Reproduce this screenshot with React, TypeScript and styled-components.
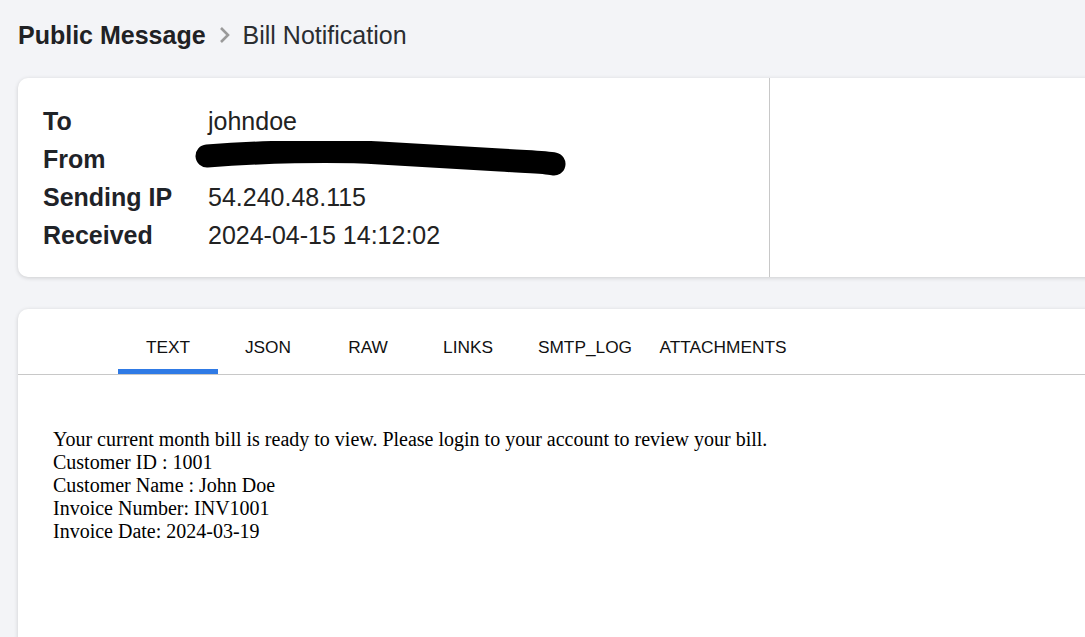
import React from "react";
import styled, { createGlobalStyle } from "styled-components";

const Global = createGlobalStyle`
  html, body { margin: 0; padding: 0; }
  body {
    background: #f3f4f7;
    font-family: "Liberation Sans", Arial, sans-serif;
    overflow: hidden;
    width: 1085px;
    height: 637px;
  }
`;

const Page = styled.div`
  padding: 21px 0 0 18px;
  display: flex;
  flex-direction: column;
`;

const Breadcrumb = styled.div`
  display: flex;
  align-items: center;
  font-size: 25px;
  line-height: 28px;
  color: #1f2328;
  height: 28px;
`;

const Crumb = styled.span<{ $bold?: boolean }>`
  font-weight: ${(p) => (p.$bold ? 700 : 400)};
  color: ${(p) => (p.$bold ? "#202124" : "#2a2d31")};
`;

const Sep = styled.span`
  display: inline-flex;
  align-items: center;
  margin: 0 12px 0 12px;
  color: #9a9a9a;
`;

const Card = styled.div`
  background: #fff;
  border-radius: 10px;
  box-shadow: 0 1px 4px rgba(0, 0, 0, 0.16);
  margin-right: -40px;
`;

const HeaderCard = styled(Card)`
  margin-top: 29px;
  height: 199px;
  display: flex;
`;

const MetaSection = styled.div`
  width: 752px;
  box-sizing: border-box;
  border-right: 1px solid #c8c8c8;
  padding: 25px 0 0 25px;
`;

const MetaGrid = styled.div`
  display: grid;
  grid-template-columns: 165px auto;
  grid-auto-rows: 37.75px;
  align-items: center;
  font-size: 25px;
`;

const Label = styled.div`
  font-weight: 700;
  color: #1f2328;
`;

const Value = styled.div`
  color: #222;
  display: flex;
  align-items: center;
`;

const Redaction = styled.svg`
  margin-left: -13px;
  margin-top: 3px;
  display: block;
`;

const SideSection = styled.div`
  flex: 1;
`;

const BodyCard = styled(Card)`
  margin-top: 32px;
  height: 400px;
  border-bottom-left-radius: 0;
  border-bottom-right-radius: 0;
`;

const TabBar = styled.div`
  display: flex;
  height: 66px;
  box-sizing: border-box;
  padding-left: 100px;
  border-bottom: 1px solid #c8c8c8;
`;

const Tab = styled.div<{ $active?: boolean; $w: number }>`
  width: ${(p) => p.$w}px;
  box-sizing: border-box;
  display: flex;
  align-items: center;
  justify-content: center;
  padding-top: 12px;
  font-size: 17.3px;
  color: #111;
  position: relative;
  &::after {
    content: "";
    display: ${(p) => (p.$active ? "block" : "none")};
    position: absolute;
    left: 0;
    right: 0;
    bottom: 0;
    height: 5px;
    background: #2f7ae5;
  }
`;

const Message = styled.div`
  padding: 53px 0 0 35px;
  font-family: "Liberation Serif", "Times New Roman", serif;
  font-size: 20px;
  line-height: 23px;
  color: #000;
`;

const Line = styled.div``;

const tabs: { name: string; w: number }[] = [
  { name: "TEXT", w: 100 },
  { name: "JSON", w: 100 },
  { name: "RAW", w: 100 },
  { name: "LINKS", w: 100 },
  { name: "SMTP_LOG", w: 134 },
  { name: "ATTACHMENTS", w: 142 },
];

export default function App() {
  return (
    <>
      <Global />
      <Page>
        <Breadcrumb>
          <Crumb $bold>Public Message</Crumb>
          <Sep>
            <svg width="13" height="20" viewBox="0 0 13 20">
              <path d="M3 3 L10 10 L3 17" fill="none" stroke="#9a9a9a" strokeWidth="2.6" />
            </svg>
          </Sep>
          <Crumb>Bill Notification</Crumb>
        </Breadcrumb>

        <HeaderCard>
          <MetaSection>
            <MetaGrid>
              <Label>To</Label>
              <Value>johndoe</Value>
              <Label>From</Label>
              <Value>
                <Redaction width="380" height="40" viewBox="0 0 380 40">
                  <path
                    d="M12 15 C 65 11, 135 9, 185 12 S 275 17, 305 19 S 350 21, 359 23"
                    fill="none"
                    stroke="#000"
                    strokeWidth="23"
                    strokeLinecap="round"
                  />
                </Redaction>
              </Value>
              <Label>Sending IP</Label>
              <Value>54.240.48.115</Value>
              <Label>Received</Label>
              <Value>2024-04-15 14:12:02</Value>
            </MetaGrid>
          </MetaSection>
          <SideSection />
        </HeaderCard>

        <BodyCard>
          <TabBar>
            {tabs.map((t, i) => (
              <Tab key={t.name} $w={t.w} $active={i === 0}>
                {t.name}
              </Tab>
            ))}
          </TabBar>
          <Message>
            <Line>
              Your current month bill is ready to view. Please login to your account to review your bill.
            </Line>
            <Line>Customer ID : 1001</Line>
            <Line>Customer Name : John Doe</Line>
            <Line>Invoice Number: INV1001</Line>
            <Line>Invoice Date: 2024-03-19</Line>
          </Message>
        </BodyCard>
      </Page>
    </>
  );
}
